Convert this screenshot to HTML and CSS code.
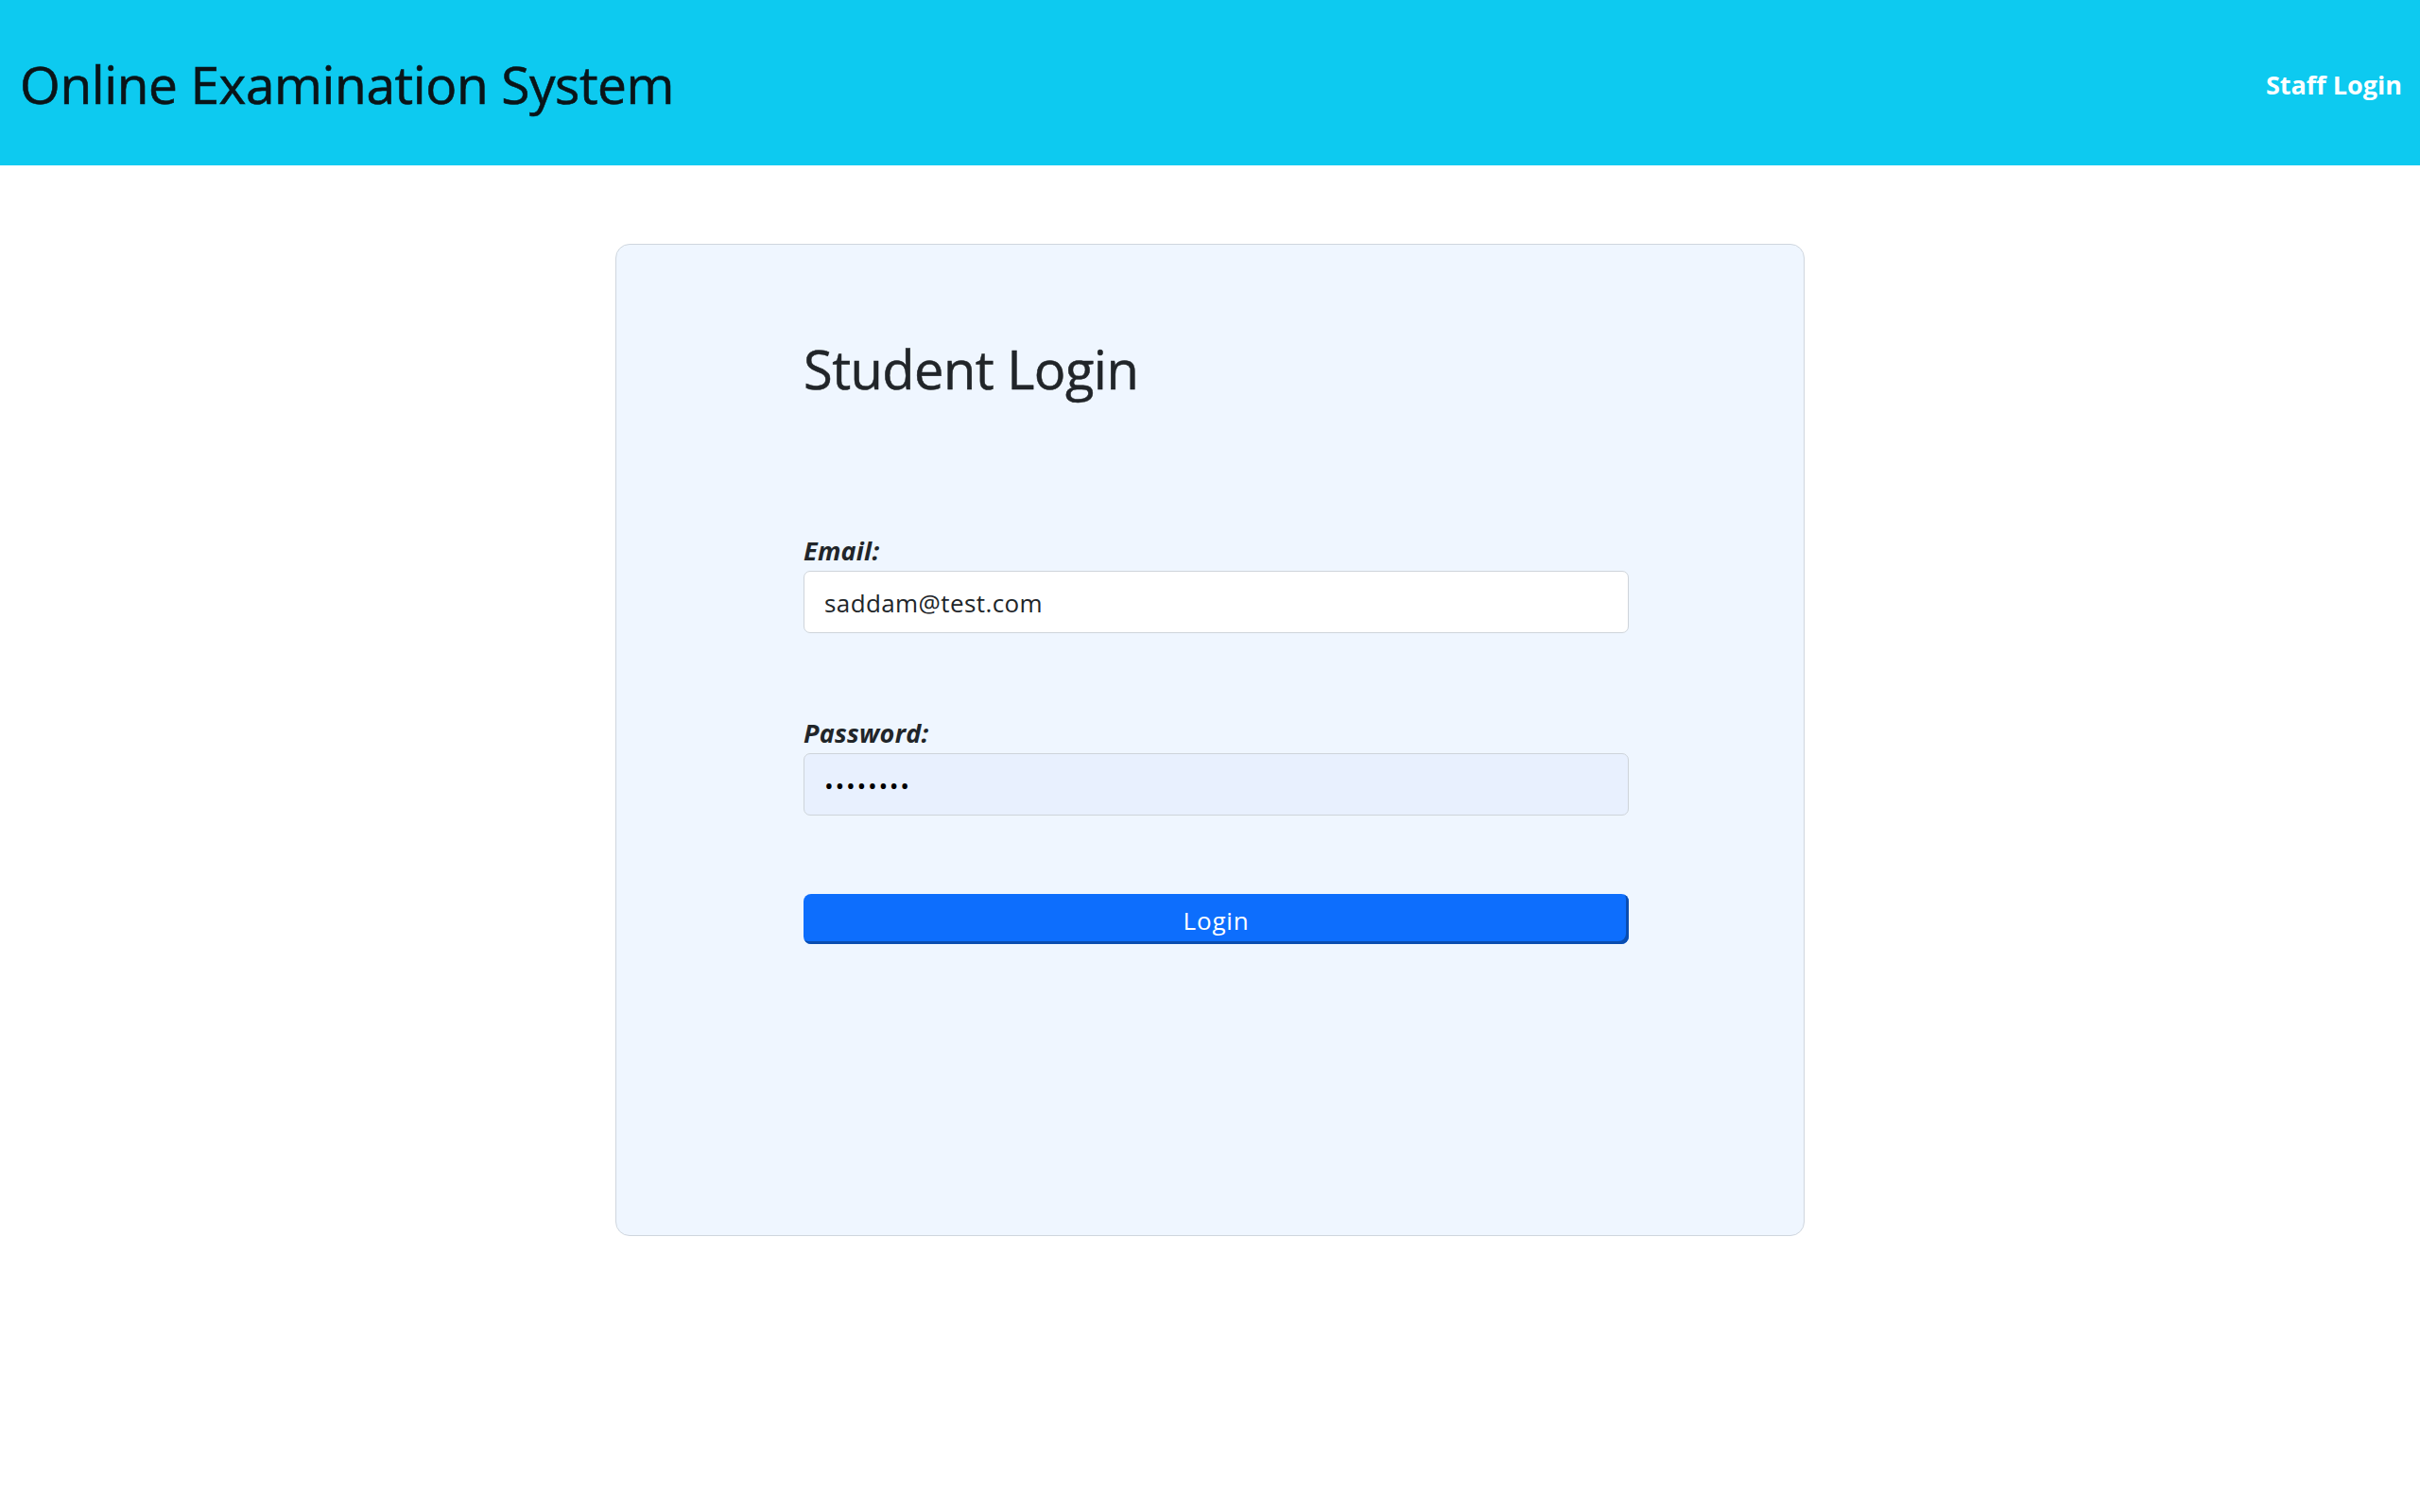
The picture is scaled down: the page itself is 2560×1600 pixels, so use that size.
FILE: index.html
```html
<!DOCTYPE html>
<html lang="en">
<head>
<meta charset="utf-8">
<title>Online Examination System</title>
<link rel="stylesheet" href="styles.css">
</head>
<body>
<header class="topbar">
  <div class="brand">Online Examination System</div>
  <a class="staff-link" href="#">Staff Login</a>
</header>
<main class="page">
  <section class="card">
    <h1 class="card-title">Student Login</h1>
    <form class="login-form">
      <div class="field">
        <label class="field-label" for="email">Email:</label>
        <input class="field-input" id="email" type="email" value="saddam@test.com">
      </div>
      <div class="field">
        <label class="field-label" for="password">Password:</label>
        <input class="field-input field-input-filled" id="password" type="password" value="saddam12">
      </div>
      <button class="login-btn" type="button">Login</button>
    </form>
  </section>
</main>
</body>
</html>
```
FILE: styles.css
```css
* { box-sizing: border-box; }
html, body { margin: 0; padding: 0; background: #ffffff; }
body {
  font-family: "Open Sans", "Noto Sans", sans-serif;
  color: #212529;
}
.topbar {
  height: 175px;
  background: #0dcaf0;
  display: flex;
  align-items: center;
  justify-content: space-between;
  padding: 0 19px 0 21px;
}
.brand {
  font-size: 55px;
  font-weight: 400;
  line-height: 1;
  color: #0a1418;
  letter-spacing: -0.4px;
  -webkit-text-stroke: 0.6px #0a1418;
  margin-top: 2px;
}
.staff-link {
  font-size: 27px;
  font-weight: 700;
  color: #ffffff;
  text-decoration: none;
  letter-spacing: 0;
  margin-top: 3px;
}
.page {
  display: flex;
  justify-content: center;
  padding-top: 83px;
}
.card {
  width: 1258px;
  min-height: 1050px;
  background: #eff6ff;
  border: 1px solid #cfd6de;
  border-radius: 15px;
  padding: 97px 186px 0 198px;
}
.card-title {
  margin: 0;
  font-size: 56px;
  font-weight: 400;
  line-height: 68px;
  letter-spacing: -0.55px;
  -webkit-text-stroke: 0.5px #212529;
  color: #212529;
}
.login-form {
  display: flex;
  flex-direction: column;
  margin-top: 142px;
  width: 873px;
}
.field {
  display: flex;
  flex-direction: column;
  gap: 4px;
  margin-bottom: 89px;
}
.field + .field { margin-bottom: 83px; }
.field-label {
  font-size: 27px;
  font-weight: 700;
  font-style: italic;
  line-height: 34px;
  letter-spacing: 0.25px;
  color: #212529;
}
.field-input {
  height: 66px;
  width: 100%;
  border: 1px solid #ced4da;
  border-radius: 7px;
  background: #ffffff;
  padding: 2px 21px 0 21px;
  font-family: "Open Sans", "Noto Sans", sans-serif;
  font-size: 26px;
  letter-spacing: 0.4px;
  color: #212529;
  outline: none;
}
.field-input-filled {
  background: #e8f0fe;
  color: #000000;
  font-size: 26px;
  letter-spacing: 1.7px;
}
.login-btn {
  height: 53px;
  width: 100%;
  border: 0;
  border-radius: 8px;
  background: #0d6efd;
  box-shadow: inset -3px -3px 0 #0a4db0;
  color: #ffffff;
  font-family: "Open Sans", "Noto Sans", sans-serif;
  font-size: 26px;
  letter-spacing: 0.8px;
  padding: 3px 0 0 0;
  cursor: pointer;
}
```
